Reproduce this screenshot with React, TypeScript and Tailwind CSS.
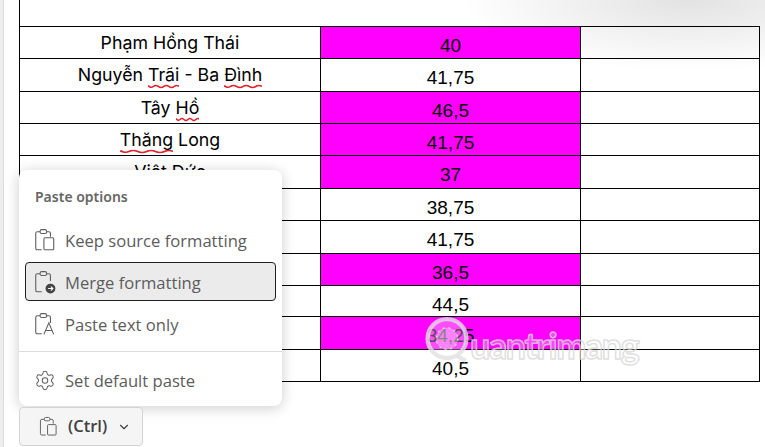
import { ChevronDown, Settings } from 'lucide-react';

const rows = [
  { name: 'Phạm Hồng Thái', score: '40', hot: true, h: 'h-[32px]' },
  { name: 'Nguyễn Trãi - Ba Đình', score: '41,75', hot: false, h: 'h-[33px]' },
  { name: 'Tây Hồ', score: '46,5', hot: true, h: 'h-[32px]' },
  { name: 'Thăng Long', score: '41,75', hot: true, h: 'h-[32px]' },
  { name: 'Việt Đức', score: '37', hot: true, h: 'h-[33px]' },
  { name: '', score: '38,75', hot: false, h: 'h-[32px]' },
  { name: '', score: '41,75', hot: false, h: 'h-[33px]' },
  { name: '', score: '36,5', hot: true, h: 'h-[32px]' },
  { name: '', score: '44,5', hot: false, h: 'h-[31px]' },
  { name: '', score: '34,25', hot: true, h: 'h-[33px]' },
  { name: '', score: '40,5', hot: false, h: 'h-[32px]' },
];

// red squiggle under spell-checked words
function Squiggle({ word }: { word: string }) {
  return (
    <span className="relative inline-block">
      {word}
      <svg className="absolute left-0 bottom-[-2px] w-full h-[5px]" preserveAspectRatio="none" viewBox="0 0 24 5">
        <path d="M0 1.5 Q2 4.5 4 2.5 T8 2.5 T12 2.5 T16 2.5 T20 2.5 T24 2.5" fill="none" stroke="#e0232e" strokeWidth="1.4" />
      </svg>
    </span>
  );
}

function RowName({ name }: { name: string }) {
  if (name === 'Nguyễn Trãi - Ba Đình') return <span>Nguyễn <Squiggle word="Trãi" /> - Ba <Squiggle word="Đình" /></span>;
  if (name === 'Tây Hồ') return <span>Tây <Squiggle word="Hồ" /></span>;
  if (name === 'Thăng Long') return <span><Squiggle word="Thăng" /> Long</span>;
  return <span>{name}</span>;
}

function ClipboardIcon({ kind, size = 22 }: { kind: 'keep' | 'merge' | 'text'; size?: number }) {
  return (
    <svg width={size} height={size + 2} viewBox="0 0 20 22" fill="none" stroke="#5f5f5f" strokeWidth="1">
      <path d="M5.5 3.5 H3 Q1.5 3.5 1.5 5 V18.5 Q1.5 20 3 20 H7" />
      <path d="M5.5 3 Q5.5 1.5 7 1.5 H10 Q11.5 1.5 11.5 3 V4 Q11.5 5 10 5 H7 Q5.5 5 5.5 4 Z" />
      {kind !== 'keep' && <path d="M11.5 3.5 H13.5 Q15 3.5 15 5 V10" />}
      {kind === 'keep' && (
        <>
          <path d="M11.5 3.5 H13.5 Q15 3.5 15 5 V8" />
          <rect x="9" y="9" width="9" height="11" rx="1" />
        </>
      )}
      {kind === 'merge' && (
        <>
          <circle cx="15" cy="17" r="4.5" fill="#444" stroke="none" />
          <path d="M12.8 17 H17 M15.4 15.2 L17.2 17 L15.4 18.8" stroke="#fff" strokeWidth="1" />
        </>
      )}
      {kind === 'text' && <path d="M9 20.5 L13.5 10 L18 20.5 M10.5 17 H16.5" />}
    </svg>
  );
}

function MenuRow({ icon, label, active, h = 'h-[39px]' }: { icon: React.ReactNode; label: string; active?: boolean; h?: string }) {
  return (
    <div className={`mx-[6px] ${h} flex items-center pl-[8px] gap-[9px] rounded-[4px] border ${active ? 'bg-[#ebebeb] border-[#1f1f1f]' : 'border-transparent'}`}>
      <span className="w-[22px] flex justify-center shrink-0">{icon}</span>
      <span className="pt-[3px] text-[16.6px] text-[#5c5c5c] font-['Open_Sans',sans-serif]">{label}</span>
    </div>
  );
}

export default function App() {
  return (
    <div className="relative w-[765px] h-[447px] overflow-hidden bg-white font-['Noto_Sans',sans-serif]">
      {/* Bande grise a gauche + ombre en haut a droite */}
      <div className="absolute left-0 top-0 bottom-0 w-[4px] bg-[#eeeeee] border-r border-[#dddddd]" />
      <div className="absolute right-0 top-0 w-[300px] h-[70px] bg-[radial-gradient(ellipse_at_75%_0%,#e2e2e2,transparent_72%)]" />

      {/* Tableau */}
      <div className="relative ml-[19px] w-[741px]">
        <div className="h-[26px] border-l border-black" />
        <div className="border-t border-black border-l border-r">
          {rows.map((r, i) => (
            <div key={i} className={`flex ${r.h} box-border border-b border-black`}>
              <div className="w-[301px] flex items-start justify-center pt-[3px] text-[17.75px] leading-[25px] text-black font-['Inter',sans-serif] border-r border-black overflow-hidden">
                <RowName name={r.name} />
              </div>
              <div className={`w-[260px] flex justify-center pt-[5px] text-[19px] leading-[27px] text-black font-['Liberation_Sans',sans-serif] border-r border-black ${r.hot ? 'bg-[#ff00ff]' : ''}`}>
                {r.score}
              </div>
              <div className="flex-1" />
            </div>
          ))}
        </div>
      </div>

      {/* Filigrane */}
      <div className="absolute left-[424px] top-[317px] flex items-start">
        <svg width="46" height="46" viewBox="0 0 64 64" fill="rgba(255,255,255,0.3)" stroke="rgba(225,225,225,0.8)">
          <circle cx="32" cy="30" r="27" strokeWidth="6" />
          <circle cx="32" cy="30" r="15" strokeWidth="2" strokeDasharray="3 5" />
          <path d="M46 54 L58 61" strokeWidth="6" />
        </svg>
        <span className="ml-[0px] mt-[8px] text-[36px] leading-[40px] tracking-[-1.4px] font-['Lato',sans-serif] font-bold text-[rgba(255,255,255,0.3)] [-webkit-text-stroke:1.5px_rgba(215,215,215,0.8)]">uantrimang</span>
      </div>

      {/* Menu Paste options */}
      <div className="absolute left-[19px] top-[170px] w-[263px] h-[236px] bg-white rounded-[8px] shadow-[0_2px_14px_rgba(0,0,0,0.2)]">
        <div className="pl-[16px] pt-[17px] h-[50px] text-[14px] leading-[20px] font-semibold text-[#666666]">Paste options</div>
        <div className="flex flex-col gap-[3px]">
          <MenuRow icon={<ClipboardIcon kind="keep" />} label="Keep source formatting" />
          <MenuRow icon={<ClipboardIcon kind="merge" />} label="Merge formatting" active />
          <MenuRow icon={<ClipboardIcon kind="text" />} label="Paste text only" />
        </div>
        <div className="h-px bg-[#dcdcdc] mt-[8px] mb-[8px]" />
        <MenuRow icon={<Settings size={23} strokeWidth={1.1} color="#5f5f5f" />} label="Set default paste" h="h-[40px]" />
      </div>

      {/* Bouton (Ctrl) */}
      <div className="absolute left-[19px] top-[407px] w-[124px] h-[39px] flex items-center pl-[19px] gap-[10px] bg-[#f5f5f5] rounded-[4px] border border-[#d4d4d4]">
        <ClipboardIcon kind="keep" size={19} />
        <span className="text-[16.5px] font-semibold text-[#404040] font-['Open_Sans',sans-serif]">(Ctrl)</span>
        <ChevronDown size={14} color="#404040" />
      </div>
    </div>
  );
}
